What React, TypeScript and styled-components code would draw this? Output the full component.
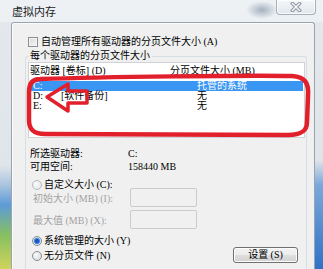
import React, { FC } from 'react';
import styled, { createGlobalStyle } from 'styled-components';

const GlobalStyle = createGlobalStyle`
  html, body {
    margin: 0;
    padding: 0;
  }

  body {
    width: 323px;
    height: 269px;
    overflow: hidden;
    font-family: 'Liberation Serif', 'Noto Sans CJK SC', serif;
    font-size: 10px;
    color: #000;
  }
`;

const Window = styled.div`
  position: relative;
  width: 323px;
  height: 269px;
  overflow: hidden;

  display: grid;
  grid-template-columns: 11px 304px 8px;
  grid-template-rows: 22px 247px;

  background:
    radial-gradient(ellipse 16px 9px at 262px 10px, rgba(105, 125, 150, 0.55), rgba(105, 125, 150, 0)),
    linear-gradient(180deg, #eef1f4 0%, #e3e8ed 100%);
`;

const TitleBar = styled.header`
  grid-column: 1 / -1;

  display: flex;
  align-items: flex-start;
  justify-content: space-between;
`;

const Title = styled.div`
  padding-left: 12px;
  margin-top: 4px;

  font-family: 'Noto Sans CJK SC', sans-serif;
  font-size: 11px;
  line-height: 14px;
  color: #1c1c1c;
`;

const CloseButton = styled.div`
  box-sizing: border-box;
  width: 40px;
  height: 15px;
  margin-right: 7px;

  display: flex;
  align-items: center;
  justify-content: center;

  border: 1px solid #a7afb9;
  border-top: none;
  border-radius: 0 0 4px 4px;
  background: linear-gradient(180deg, #f5f7f9 0%, #e2e6eb 100%);
  box-shadow: inset 0 0 0 1px rgba(255, 255, 255, 0.7);
`;

interface FrameProps {
  side: 'left' | 'right';
}

const Frame = styled.div<FrameProps>`
  background: ${({ side }) =>
    side === 'left'
      ? 'linear-gradient(180deg, #e4e8ec 0%, #e0e5ea 58%, #a9c4de 66%, #5d9bd8 74%, #86bf62 86%, #cfd45a 100%)'
      : 'linear-gradient(180deg, #e4e8ec 0%, #dfe4ea 56%, #7aa8da 66%, #2f72c6 100%)'};
`;

const Panel = styled.main`
  box-sizing: border-box;
  display: flex;
  flex-direction: column;

  padding-top: 13px;

  background: #f0f0f0;
  border: 1px solid #9aa4ae;
  border-bottom: none;
  border-radius: 3px 3px 0 0;
  box-shadow: inset 1px 1px 0 #fbfbfb;
`;

const CheckRow = styled.label`
  display: flex;
  align-items: center;
  gap: 3px;

  height: 12px;
  margin-left: 16px;
  line-height: 12px;
`;

const CheckBox = styled.span`
  box-sizing: border-box;
  width: 10px;
  height: 10px;

  border: 1px solid #8f8f8f;
  background: linear-gradient(135deg, #d8d8d8 0%, #f7f7f7 100%);
  box-shadow: inset 0 0 0 1px #f3f3f3;
`;

const GroupBox = styled.fieldset`
  flex: 1;
  min-width: 0;

  margin: 2px 7px 0 13px;
  padding: 0 1px 0 3px;

  border: 1px solid #d5dfe5;
  border-bottom: none;
  border-radius: 3px 3px 0 0;
`;

const Legend = styled.legend`
  padding: 0 2px 0 1px;
  line-height: 12px;
`;

const List = styled.div`
  box-sizing: border-box;
  height: 76px;
  margin-left: -1px;

  background: #fff;
  border: 1px solid #cfd3d8;
`;

const ListHeader = styled.div`
  display: grid;
  grid-template-columns: 140px 1fr;

  height: 18px;
  padding-left: 1px;
  padding-top: 1px;
  box-sizing: border-box;
  line-height: 14px;
`;

interface ListRowProps {
  selected?: boolean;
}

const ListRow = styled.div<ListRowProps>`
  display: grid;
  grid-template-columns: 164px 1fr;

  height: 10px;
  margin: 0 1px;
  padding-left: 3px;
  line-height: 10px;

  background: ${({ selected }) => (selected ? '#3a96f3' : 'transparent')};
  color: ${({ selected }) => (selected ? '#fff' : '#000')};
`;

const Drive = styled.span`
  display: inline-block;
  width: 28px;
`;

const InfoGrid = styled.div`
  display: grid;
  grid-template-columns: 98px auto;

  margin-top: 9px;
  padding-left: 1px;
  line-height: 13px;
`;

interface RadioProps {
  checked?: boolean;
  dim?: boolean;
}

const RadioRow = styled.label<{ top?: number }>`
  display: flex;
  align-items: center;
  gap: 2px;

  height: 12px;
  margin-top: ${({ top }) => top ?? 0}px;
  padding-left: 3px;
  line-height: 12px;
`;

const RadioDot = styled.span<RadioProps>`
  box-sizing: border-box;
  width: 10px;
  height: 10px;

  border-radius: 50%;
  border: 1px solid ${({ dim }) => (dim ? '#b6babe' : '#8b8d90')};
  background: ${({ checked, dim }) =>
    checked
      ? 'radial-gradient(circle, #1d56c2 0 1.6px, #4f95ea 2.8px, #dbe6f3 3.6px)'
      : dim
      ? 'radial-gradient(circle at 35% 35%, #fbfbfb, #e0e2e4)'
      : 'radial-gradient(circle at 35% 35%, #fafafa, #d3d6d9)'};
`;

const FieldRow = styled.div<{ top: number }>`
  display: flex;
  align-items: center;

  height: 19px;
  margin-top: ${({ top }) => top}px;
  padding-left: 4px;
  padding-top: 2px;
  box-sizing: border-box;
`;

const FieldLabel = styled.span`
  width: 97px;
  color: #a3a3a3;
  line-height: 12px;
`;

const TextBox = styled.div`
  box-sizing: border-box;
  width: 67px;
  height: 19px;
  margin-top: -2px;

  background: #f0f0f0;
  border: 1px solid #c9cbcd;
  border-radius: 2px;
`;

const BottomRow = styled.div`
  display: flex;
  align-items: flex-end;
  justify-content: space-between;

  margin-top: 6px;
`;

const RadioColumn = styled.div`
  display: flex;
  flex-direction: column;
  gap: 3px;
`;

const Button = styled.button`
  box-sizing: border-box;
  width: 65px;
  height: 16px;
  margin: 0 7px -1px 0;
  padding: 0;

  font-family: 'Liberation Serif', 'Noto Sans CJK SC', serif;
  font-size: 10px;
  line-height: 14px;
  color: #000;

  border: 1px solid #707070;
  border-radius: 3px;
  background: linear-gradient(180deg, #f3f3f3 0%, #ececec 48%, #dedede 52%, #d2d2d2 100%);
  box-shadow: inset 0 0 0 1px #fcfcfc;
`;

const Overlay = styled.svg`
  position: absolute;
  top: 0;
  left: 0;
  pointer-events: none;
`;

const CloseGlyph: FC = () => (
  <svg width="12" height="10" viewBox="0 0 12 10">
    <path d="M2.5 1.5 L9.5 8.5 M9.5 1.5 L2.5 8.5" stroke="#8c949e" strokeWidth="3.4" strokeLinecap="square" />
    <path d="M2.5 1.5 L9.5 8.5 M9.5 1.5 L2.5 8.5" stroke="#fbfbfb" strokeWidth="1.4" strokeLinecap="square" />
  </svg>
);

type DriveRow = { drive: string; label?: string; size: string; selected?: boolean };

const drives: DriveRow[] = [
  { drive: 'C:', size: '托管的系统', selected: true },
  { drive: 'D:', label: '[软件备份]', size: '无' },
  { drive: 'E:', size: '无' },
];

const App: FC = () => (
  <>
    <GlobalStyle />
    <Window>
      <TitleBar>
        <Title>虚拟内存</Title>
        <CloseButton>
          <CloseGlyph />
        </CloseButton>
      </TitleBar>

      <Frame side="left" />

      <Panel>
        <CheckRow>
          <CheckBox />
          自动管理所有驱动器的分页文件大小 (A)
        </CheckRow>

        <GroupBox>
          <Legend>每个驱动器的分页文件大小</Legend>

          <List>
            <ListHeader>
              <span>驱动器 [卷标] (D)</span>
              <span>分页文件大小 (MB)</span>
            </ListHeader>
            {drives.map(({ drive, label, size, selected }) => (
              <ListRow selected={selected} key={drive}>
                <span>
                  <Drive>{drive}</Drive>
                  {label}
                </span>
                <span>{size}</span>
              </ListRow>
            ))}
          </List>

          <InfoGrid>
            <span>所选驱动器:</span>
            <span>C:</span>
            <span>可用空间:</span>
            <span>158440 MB</span>
          </InfoGrid>

          <RadioRow top={6}>
            <RadioDot dim />
            自定义大小 (C):
          </RadioRow>
          <FieldRow top={-3}>
            <FieldLabel>初始大小 (MB) (I):</FieldLabel>
            <TextBox />
          </FieldRow>
          <FieldRow top={3}>
            <FieldLabel>最大值 (MB) (X):</FieldLabel>
            <TextBox />
          </FieldRow>

          <BottomRow>
            <RadioColumn>
              <RadioRow>
                <RadioDot checked />
                系统管理的大小 (Y)
              </RadioRow>
              <RadioRow>
                <RadioDot />
                无分页文件 (N)
              </RadioRow>
            </RadioColumn>
            <Button>设置 (S)</Button>
          </BottomRow>
        </GroupBox>
      </Panel>

      <Frame side="right" />

      <Overlay width="323" height="269" viewBox="0 0 323 269">
        <path
          d="M40 79 C100 77, 250 75, 292 76 C306 77, 309 84, 308 96 L307 122 C307 132, 300 135, 288 135 L45 134 C34 134, 29 130, 29 120 L29 92 C29 84, 32 79, 40 79 Z"
          fill="none"
          stroke="#e2202c"
          strokeWidth="4.5"
        />
        <path
          d="M47 97 L68 84 L68 91 L87 91 L87 103 L68 103 L68 111 Z"
          fill="none"
          stroke="#e2202c"
          strokeWidth="3.5"
          strokeLinejoin="round"
        />
      </Overlay>
    </Window>
  </>
);

export default App;
